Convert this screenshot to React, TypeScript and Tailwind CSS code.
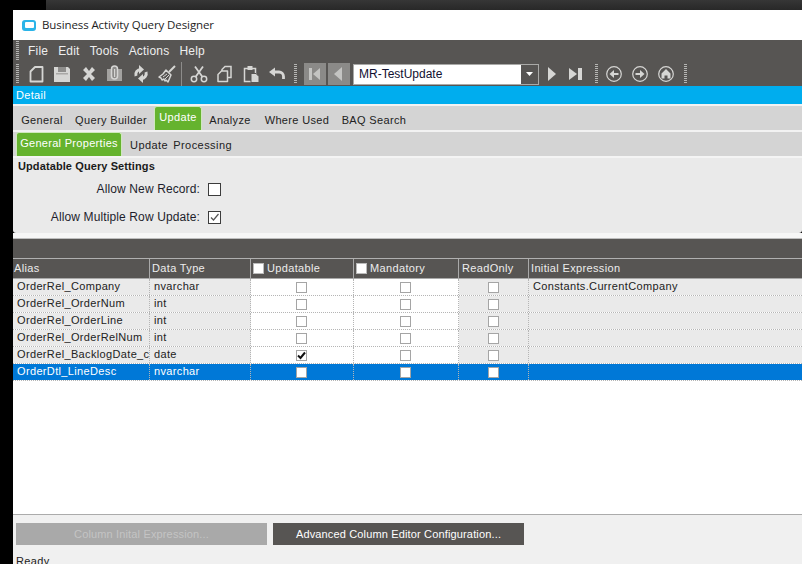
import React from "react";

const ic = "#d6d6d4";

function Grip({ cls = "" }: { cls?: string }) {
  return <div className={"w-[3px] h-[20px] bg-[repeating-linear-gradient(to_bottom,#b5b5b3_0,#b5b5b3_1px,transparent_1px,transparent_2px)] " + cls} />;
}

function Ico({ w = 18, children, cls = "" }: { w?: number; children: React.ReactNode; cls?: string }) {
  return (
    <svg width={w} height={18} viewBox={`0 0 ${w} 18`} className={"shrink-0 " + cls}>
      {children}
    </svg>
  );
}

const NewIcon = () => (
  <Ico><path d="M7 2h7.500v14.500H2.500V6.500z" fill="none" stroke={ic} strokeWidth="1.800" strokeLinejoin="round" /></Ico>
);
const SaveIcon = () => (
  <Ico><path d="M0 2h14l2 2v13H0z" fill={ic} /><rect x="4" y="2" width="8" height="5" fill="#8f8e8c" /><rect x="2" y="8" width="12" height="1.500" fill="#a9a8a6" /></Ico>
);
const XIcon = () => (
  <Ico><path d="M3 5l3-3 3 4 3-4 3 3-4 4 4 4-3 3-3-4-3 4-3-3 4-4z" fill={ic} /></Ico>
);
const ClipIcon = () => (
  <Ico><rect x="1" y="4" width="15" height="12" fill="#a3a2a0" /><rect x="5.500" y="1" width="6" height="13" rx="3" fill="#8b8a88" stroke={ic} strokeWidth="1.500" /><rect x="8" y="4" width="1.200" height="8" fill={ic} /></Ico>
);
const RefreshIcon = () => (
  <Ico><path d="M9 4.500A5 5 0 0 0 4 11" fill="none" stroke={ic} strokeWidth="3" /><path d="M7 0v9l5-4.500z" fill={ic} /><path d="M9 13.500A5 5 0 0 0 14 7" fill="none" stroke={ic} strokeWidth="3" /><path d="M11 9v9l-5-4.500z" fill={ic} /></Ico>
);
const BroomIcon = () => (
  <Ico><path d="M11 7l6-6" stroke={ic} strokeWidth="2" /><path d="M8 5l5 5-3 7-2-2-1 1-1-2-2 1-1-2-2-1 4-3z" fill="none" stroke={ic} strokeWidth="1.500" strokeLinejoin="round" /><path d="M5 12l4-3M7 14l4-4" stroke={ic} strokeWidth="1" /></Ico>
);
const CutIcon = () => (
  <Ico><circle cx="4" cy="14" r="2.700" fill="none" stroke={ic} strokeWidth="1.500" /><circle cx="14" cy="14" r="2.700" fill="none" stroke={ic} strokeWidth="1.500" /><path d="M5.500 12L13 1.500M12.500 12L5 1.500" stroke={ic} strokeWidth="1.800" /></Ico>
);
const CopyIcon = () => (
  <Ico><path d="M9 1.500h6v11H6V4.500z" fill="none" stroke={ic} strokeWidth="1.500" /><path d="M5.500 6h6v10.500H2V9.500z" fill="#575553" stroke={ic} strokeWidth="1.500" strokeLinejoin="round" /></Ico>
);
const PasteIcon = () => (
  <Ico><path d="M2.500 3.500h11v13h-11z" fill="none" stroke={ic} strokeWidth="1.500" /><rect x="5.500" y="1" width="5" height="4" fill={ic} /><path d="M9 8.500h5l3 3v6H9z" fill={ic} stroke="#575553" strokeWidth="1" /></Ico>
);
const UndoIcon = () => (
  <Ico><path d="M5 7h6a4.500 4.500 0 0 1 4.500 4.500V14" fill="none" stroke={ic} strokeWidth="2.800" /><path d="M7 2.500v9L1 7z" fill={ic} /></Ico>
);
const Circle = ({ kind }: { kind: "l" | "r" | "h" }) => (
  <svg width={16} height={16} viewBox="0 0 16 16" className="shrink-0">
    <circle cx="8" cy="8" r="7.300" fill="none" stroke={ic} strokeWidth="1.200" />
    {kind === "l" && <path d="M12.500 7H8V4L3.500 8 8 12V9h4.500z" fill={ic} />}
    {kind === "r" && <path d="M3.500 7H8V4l4.500 4L8 12V9H3.500z" fill={ic} />}
    {kind === "h" && <path d="M8 3l4.500 4.500V12.500H9.500V9.500h-3V12.500h-3V7.500z" fill={ic} />}
  </svg>
);

function Check({ on = false, cls = "" }: { on?: boolean; cls?: string }) {
  return (
    <div className={"w-[11px] h-[11px] border border-[#a5a5a5] bg-white flex items-center justify-center " + cls}>
      {on && (
        <svg width="9" height="9" viewBox="0 0 9 9"><path d="M1 4.500l2.500 2.500L8 1.500" fill="none" stroke="#111" strokeWidth="2" /></svg>
      )}
    </div>
  );
}

const rows = [
  ["OrderRel_Company", "nvarchar", false, "Constants.CurrentCompany"],
  ["OrderRel_OrderNum", "int", false, ""],
  ["OrderRel_OrderLine", "int", false, ""],
  ["OrderRel_OrderRelNum", "int", false, ""],
  ["OrderRel_BacklogDate_c", "date", true, ""],
  ["OrderDtl_LineDesc", "nvarchar", false, ""],
] as const;

export default function App() {
  return (
    <div className="w-[802px] h-[564px] overflow-hidden flex bg-black text-[11px] text-[#222] font-['Liberation_Sans',Arial,sans-serif] tracking-[0.35px]">
      <div className="w-[13px] shrink-0 bg-black" />
      <div className="flex-1 min-w-0 flex flex-col">
        <div className="h-[10px] shrink-0 flex">
          <div className="w-[33px] bg-black" />
          <div className="flex-1 bg-linear-to-b from-[#363636] to-[#282828]" />
        </div>

        <div className="h-[30px] shrink-0 bg-white flex items-center pl-[9px] gap-[6px]">
          <div className="w-[14px] h-[11px] rounded-[3px] bg-[#2bb4e8] flex items-center justify-center">
            <div className="w-[9px] h-[6px] bg-white rounded-[1px]" />
          </div>
          <span className="text-[11.5px] tracking-[-0.1px] font-['Open_Sans',sans-serif] text-[#1e1e1e]">Business Activity Query Designer</span>
        </div>

        <div className="h-[22px] shrink-0 bg-[#575553] flex items-center pl-[3px] text-[12px] text-[#eeeeee] tracking-[0.2px]">
          <Grip cls="h-[12px] mr-[9px]" />
          <div className="flex gap-[10px]">
            <span>File</span>
            <span>Edit</span>
            <span>Tools</span>
            <span>Actions</span>
            <span>Help</span>
          </div>
        </div>

        <div className="h-[24px] shrink-0 bg-[#575553] flex items-center pl-[3px]">
          <Grip cls="mr-[9px]" />
          <div className="flex items-center gap-[8px]">
            <NewIcon /><SaveIcon /><XIcon /><ClipIcon /><RefreshIcon /><BroomIcon />
          </div>
          <div className="w-px h-[24px] bg-[#8d8c8a] ml-[5px] mr-[8px]" />
          <div className="flex items-center gap-[8px]">
            <CutIcon /><CopyIcon /><PasteIcon /><UndoIcon />
          </div>
          <Grip cls="ml-[8px] mr-[7px]" />
          <div className="w-[22px] h-[22px] bg-[#8b8a88] flex items-center justify-center mr-[2px]">
            <svg width="14" height="14" viewBox="0 0 14 14"><rect x="1" y="1" width="3" height="12" fill="#c4c4c2" /><path d="M12 1v12L5 7z" fill="#c4c4c2" /></svg>
          </div>
          <div className="w-[22px] h-[22px] bg-[#8b8a88] flex items-center justify-center mr-[3px]">
            <svg width="12" height="14" viewBox="0 0 12 14"><path d="M9 0v14L1 7z" fill="#c4c4c2" /></svg>
          </div>
          <div className="w-[186px] h-[21px] border border-[#a9a9a7] bg-white flex items-center">
            <span className="flex-1 pl-[5px] text-[12px] tracking-normal text-[#101030]">MR-TestUpdate</span>
            <div className="w-[17px] h-full bg-[#575553] flex items-center justify-center">
              <svg width="7" height="4" viewBox="0 0 7 4"><path d="M0 0h7L3.500 4z" fill="#fff" /></svg>
            </div>
          </div>
          <svg width="10" height="14" viewBox="0 0 10 14" className="ml-[8px]"><path d="M1 0v14l8-7z" fill={ic} /></svg>
          <svg width="14" height="14" viewBox="0 0 14 14" className="ml-[12px]"><path d="M0 1v12l8-6z" fill={ic} /><rect x="9" y="1" width="4" height="12" fill={ic} /></svg>
          <Grip cls="ml-[12px] mr-[8px]" />
          <div className="flex items-center gap-[10px]">
            <Circle kind="l" /><Circle kind="r" /><Circle kind="h" />
          </div>
          <Grip cls="ml-[10px]" />
        </div>

        <div className="h-[18px] shrink-0 bg-[#00adee] text-white text-[11px] tracking-[0.3px] leading-[18px] pl-[3px]">Detail</div>
        <div className="h-[2px] shrink-0 bg-[#f2f2f2]" />

        <div className="h-[24px] shrink-0 bg-[#d4d4d4] flex items-end pl-[2px]">
          <Tab label="General" w={54} />
          <Tab label="Query Builder" w={84} />
          <Active label="Update" w={48} ml={1} />
          <Tab label="Analyze" w={56} />
          <Tab label="Where Used" w={78} />
          <Tab label="BAQ Search" w={76} />
        </div>
        <div className="h-[2px] shrink-0 bg-[#f2f2f2]" />

        <div className="h-[24px] shrink-0 bg-[#d4d4d4] flex items-end pl-[3px]">
          <Active label="General Properties" w={106} cls="tracking-[0.3px]" />
          <div className="pl-[8px] pb-[3px] tracking-[0.45px] flex gap-[5px]">
            <span>Update</span>
            <span>Processing</span>
          </div>
        </div>

        <div className="h-[2px] shrink-0 bg-[#f4f4f4]" />
        <div className="h-[75px] shrink-0 bg-[#eaeaea] rounded-b-[3px] flex flex-col">
          <div className="pl-[5px] pt-[1px] h-[21px] font-bold tracking-[0.1px] leading-[14px] text-[#1a1a1a]">Updatable Query Settings</div>
          <Setting label="Allow New Record:" cls="mt-[3px]" />
          <Setting label="Allow Multiple Row Update:" on cls="mt-[13px]" />
        </div>
        <div className="h-[5px] shrink-0 bg-[#f6f6f6]" />
        <div className="h-[1px] shrink-0 bg-[#bdbdbd]" />

        <div className="h-[19px] shrink-0 bg-[#575553]" />
        <div className="h-[1px] shrink-0 bg-[#b0b0b0]" />

        <div className="flex-1 min-h-0 bg-white flex flex-col">
          <div className="h-[19px] shrink-0 bg-[#575553] text-[#ededed] flex border-b border-[#a9a9a9] box-content">
            <HeadCell w={137} pl="pl-[1px]">Alias</HeadCell>
            <HeadCell w={101} pl="pl-[2px]">Data Type</HeadCell>
            <HeadCell w={103} pl="pl-[2px]" box>Updatable</HeadCell>
            <HeadCell w={105} pl="pl-[2px]" box>Mandatory</HeadCell>
            <HeadCell w={70} pl="pl-[3px]">ReadOnly</HeadCell>
            <div className="flex-1 pl-[2px] flex items-center">Initial Expression</div>
          </div>
          {rows.map((r, i) => {
            const sel = i === 5;
            const label = sel ? "bg-[#0078d7] text-white" : "bg-[#eaeaea] text-[#222]";
            const white = sel ? "bg-[#0078d7]" : "bg-white";
            return (
              <div key={r[0]} className="h-[17px] shrink-0 flex leading-[14px] border-b border-dotted border-[#b5b5b5]">
                <Cell w={137} cls={label + " pl-[4px] whitespace-nowrap"}>{r[0]}</Cell>
                <Cell w={101} cls={label + " pl-[4px]"}>{r[1]}</Cell>
                <Cell w={103} cls={white + " flex justify-center items-center pr-[2px]"}><Check on={r[2]} /></Cell>
                <Cell w={105} cls={white + " flex justify-center items-center pr-[2px]"}><Check /></Cell>
                <Cell w={70} cls={label + " flex justify-center items-center"}><Check /></Cell>
                <div className={"flex-1 pl-[4px] " + label}>{r[3]}</div>
              </div>
            );
          })}
          <div className="flex-1" />
          <div className="h-[1px] shrink-0 bg-[#ababab]" />
        </div>

        <div className="h-[35px] shrink-0 bg-[#f0f0f0] flex pl-[3px] pt-[8px] gap-[6px] tracking-[0.15px]">
          <div className="w-[251px] h-[22px] bg-[#a9a9a9] text-[#c4c4c4] flex items-center justify-center">Column Inital Expression...</div>
          <div className="w-[251px] h-[22px] bg-[#575553] text-white flex items-center justify-center">Advanced Column Editor Configuration...</div>
        </div>
        <div className="h-[14px] shrink-0 bg-[#f0f0f0] pl-[3px] leading-[22px] overflow-hidden text-[#222]">Ready</div>
      </div>
    </div>
  );
}

function Tab({ label, w }: { label: string; w: number }) {
  return (
    <div style={{ width: w }} className="h-[24px] flex items-center justify-center pt-[4px] whitespace-nowrap text-[#222]">{label}</div>
  );
}

function Active({ label, w, ml = 0, cls = "" }: { label: string; w: number; ml?: number; cls?: string }) {
  return (
    <div style={{ width: w, marginLeft: ml }} className={"h-[24px] shrink-0 bg-[#65b32e] border border-b-0 border-[#cfe8bd] rounded-t-[3px] text-white flex items-center justify-center pb-[2px] whitespace-nowrap " + cls}>{label}</div>
  );
}

function Setting({ label, on = false, cls = "" }: { label: string; on?: boolean; cls?: string }) {
  return (
    <div className={"flex items-center h-[15px] pl-[5px] " + cls}>
      <div className="w-[183px] text-right text-[12px] tracking-[0.12px] text-[#1e1e2c] pr-[1px] pb-[2px]">{label}</div>
      <div className="w-[13px] h-[13px] ml-[7px] border border-[#3c3c3c] bg-white flex items-center justify-center">
        {on && <svg width="11" height="11" viewBox="0 0 11 11"><path d="M2 5.500l2.500 2.500L9.500 2" fill="none" stroke="#555" strokeWidth="1.200" /></svg>}
      </div>
    </div>
  );
}

function HeadCell({ w, pl, box = false, children }: { w: number; pl: string; box?: boolean; children: React.ReactNode }) {
  return (
    <div style={{ width: w }} className={"shrink-0 h-[19px] border-r border-[#a9a9a9] flex items-center gap-[3px] " + pl}>
      {box && <div className="w-[11px] h-[11px] bg-white border border-[#bbb] shrink-0" />}
      <span>{children}</span>
    </div>
  );
}

function Cell({ w, cls, children }: { w: number; cls: string; children: React.ReactNode }) {
  return (
    <div style={{ width: w }} className={"shrink-0 border-r border-dotted border-[#b5b5b5] " + cls}>{children}</div>
  );
}
